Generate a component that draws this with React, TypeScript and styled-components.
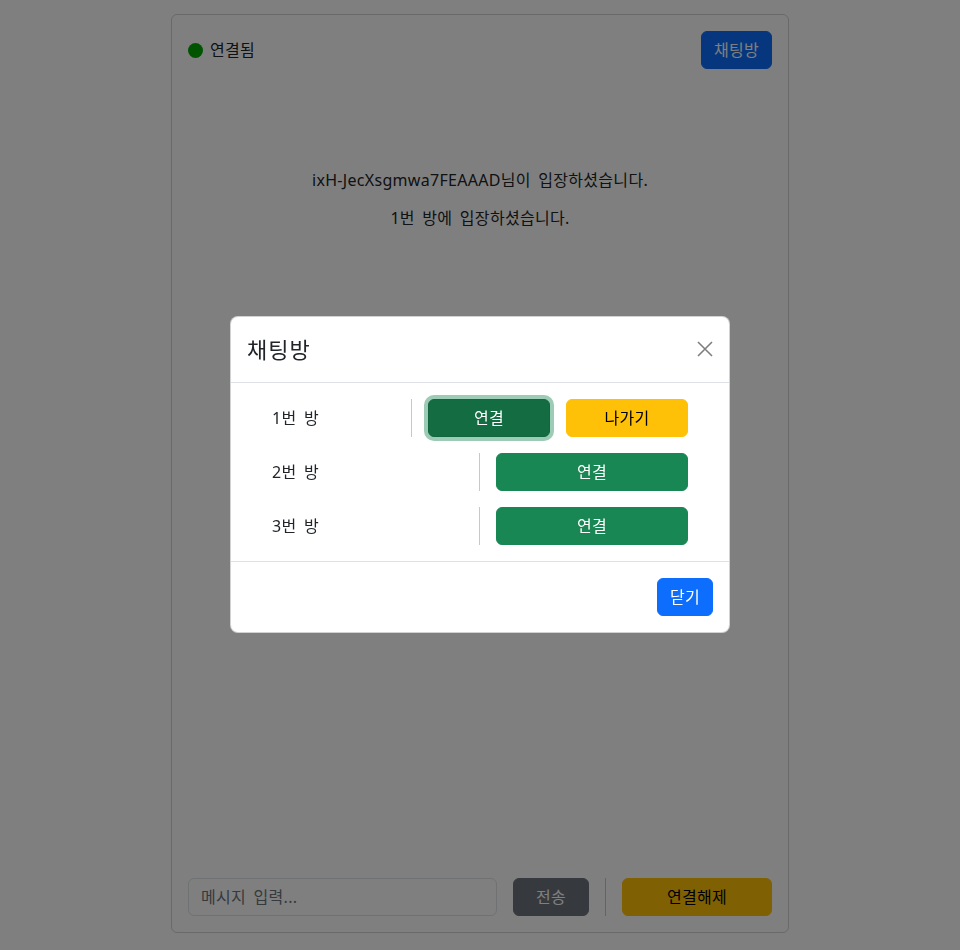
import React from 'react';
import styled, { createGlobalStyle, css } from 'styled-components';

const GlobalStyle = createGlobalStyle`
  * { box-sizing: border-box; }
  body {
    margin: 0;
    background: #fff;
    color: #212529;
    font-family: "Noto Sans", "Noto Sans CJK KR", sans-serif;
    font-size: 16px;
    line-height: 1.5;
    letter-spacing: 0.3px;
    word-spacing: 3px;
  }
`;

type Variant = 'primary' | 'secondary' | 'success' | 'warning';

const variants = {
  primary: css`
    background: #0d6efd;
    border-color: #0d6efd;
    color: #fff;
  `,
  secondary: css`
    background: #6c757d;
    border-color: #6c757d;
    color: #fff;
  `,
  success: css`
    background: #198754;
    border-color: #198754;
    color: #fff;
  `,
  warning: css`
    background: #ffc107;
    border-color: #ffc107;
    color: #000;
  `,
};

const Button = styled.button<{ $variant: Variant; $width?: number; $active?: boolean }>`
  height: 38px;
  padding: 6px 12px;
  border: 1px solid transparent;
  border-radius: 6px;
  font-family: inherit;
  font-size: 16px;
  line-height: 24px;
  letter-spacing: inherit;
  cursor: pointer;
  flex-shrink: 0;
  ${({ $width }) => $width && `width: ${$width}px;`}
  ${({ $variant }) => variants[$variant]}
  ${({ $active }) =>
    $active &&
    css`
      background: #146c43;
      border-color: #13653f;
      box-shadow: 0 0 0 4px rgba(60, 153, 110, 0.5);
    `}
`;

const Page = styled.div`
  padding-top: 14px;
`;

const Card = styled.div`
  width: 618px;
  height: 919px;
  margin: 0 auto;
  padding: 16px;
  border: 1px solid rgba(0, 0, 0, 0.175);
  border-radius: 6px;
  display: flex;
  flex-direction: column;
`;

const TopBar = styled.div`
  display: flex;
  align-items: center;
  justify-content: space-between;
`;

const Status = styled.div`
  display: flex;
  align-items: center;
  gap: 7px;
`;

const Dot = styled.span`
  width: 15px;
  height: 15px;
  border-radius: 50%;
  background: #00a800;
`;

const MessageList = styled.div`
  flex: 1;
  padding-top: 99px;
  text-align: center;
`;

const Message = styled.p`
  margin: 0 0 14px;
`;

const Composer = styled.div`
  display: flex;
  gap: 16px;
`;

const Input = styled.input`
  width: 310px;
  height: 38px;
  padding: 6px 12px;
  border: 1px solid #dee2e6;
  border-radius: 6px;
  font-family: inherit;
  font-size: 16px;
  letter-spacing: inherit;
  word-spacing: inherit;
  color: #212529;
  &::placeholder {
    color: #6c757d;
  }
`;

const Divider = styled.div`
  width: 1px;
  align-self: stretch;
  background: #212529;
  opacity: 0.25;
`;

const Backdrop = styled.div`
  position: fixed;
  inset: 0;
  padding-bottom: 2px;
  background: rgba(0, 0, 0, 0.5);
  display: flex;
  align-items: center;
  justify-content: center;
`;

const Modal = styled.div`
  width: 500px;
  background: #fff;
  border: 1px solid rgba(0, 0, 0, 0.175);
  border-radius: 8px;
`;

const ModalHeader = styled.div`
  display: flex;
  align-items: center;
  justify-content: space-between;
  padding: 16px;
  border-bottom: 1px solid #dee2e6;
`;

const ModalTitle = styled.h5`
  margin: 0;
  font-size: 22px;
  font-weight: 400;
  line-height: 33px;
  letter-spacing: 1px;
`;

const CloseButton = styled.button`
  width: 16px;
  height: 16px;
  padding: 0;
  border: 0;
  background: transparent;
  opacity: 0.5;
  cursor: pointer;
  display: flex;
`;

const ModalBody = styled.div`
  padding: 16px;
  display: flex;
  flex-direction: column;
  gap: 16px;
`;

const RoomRow = styled.div`
  display: flex;
  align-items: stretch;
  gap: 16px;
  padding: 0 25px;
`;

const RoomName = styled.div`
  flex: 1;
  display: flex;
  align-items: center;
`;

const ModalFooter = styled.div`
  display: flex;
  justify-content: flex-end;
  padding: 12px;
  border-top: 1px solid #dee2e6;
  & > button {
    margin: 4px;
  }
`;

const rooms = [
  { id: 1, joined: true },
  { id: 2, joined: false },
  { id: 3, joined: false },
];

function App() {
  return (
    <>
      <GlobalStyle />
      <Page>
        <Card>
          <TopBar>
            <Status>
              <Dot />
              <span>연결됨</span>
            </Status>
            <Button $variant="primary">채팅방</Button>
          </TopBar>
          <MessageList>
            <Message>ixH-JecXsgmwa7FEAAAD님이 입장하셨습니다.</Message>
            <Message>1번 방에 입장하셨습니다.</Message>
          </MessageList>
          <Composer>
            <Input placeholder="메시지 입력..." />
            <Button $variant="secondary" $width={76}>전송</Button>
            <Divider />
            <Button $variant="warning" $width={150}>연결해제</Button>
          </Composer>
        </Card>
      </Page>
      <Backdrop>
        <Modal>
          <ModalHeader>
            <ModalTitle>채팅방</ModalTitle>
            <CloseButton aria-label="Close">
              <svg width="16" height="16" viewBox="0 0 16 16">
                <path d="M1 1 L15 15 M15 1 L1 15" stroke="#000" strokeWidth="1.6" />
              </svg>
            </CloseButton>
          </ModalHeader>
          <ModalBody>
            {rooms.map((room) => (
              <RoomRow key={room.id}>
                <RoomName>{room.id}번 방</RoomName>
                <Divider />
                {room.joined ? (
                  <>
                    <Button $variant="success" $width={122} $active>연결</Button>
                    <Button $variant="warning" $width={122}>나가기</Button>
                  </>
                ) : (
                  <Button $variant="success" $width={192}>연결</Button>
                )}
              </RoomRow>
            ))}
          </ModalBody>
          <ModalFooter>
            <Button $variant="primary">닫기</Button>
          </ModalFooter>
        </Modal>
      </Backdrop>
    </>
  );
}

export default App;
